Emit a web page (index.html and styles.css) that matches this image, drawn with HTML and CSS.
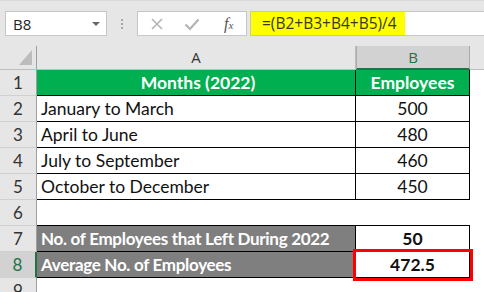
FILE: index.html
```html
<!DOCTYPE html>
<html lang="en">
<head>
    <meta charset="UTF-8">
    <title>Average No. of Employees</title>
    <link rel="stylesheet" href="styles.css">
</head>
<body>

    <!-- Name box and formula bar -->
    <div class="toolbar">
        <div class="namebox">
            <span>B8</span>
            <span class="caret"></span>
        </div>
        <div class="grip"><i></i><i></i><i></i></div>
        <div class="fbuttons">
            <svg width="14" height="14" viewBox="0 0 14 14"><path d="M2 2 L12 12 M12 2 L2 12" stroke="#b4b4b4" stroke-width="1.6" fill="none"/></svg>
            <svg width="16" height="14" viewBox="0 0 16 14"><path d="M1.5 7.5 L6 12 L14.5 2.5" stroke="#b4b4b4" stroke-width="2.2" fill="none"/></svg>
            <span class="fx">f<small>x</small></span>
        </div>
        <div class="formula"><span class="hl">=(B2+B3+B4+B5)/4</span></div>
    </div>

    <!-- Worksheet -->
    <div class="sheet">
        <div class="corner"><span class="tri"></span></div>
        <div class="ch">A</div>
        <div class="ch active">B</div>
        <div class="ch blank"></div>

        <div class="rh">1</div>
        <div class="cell head">Months (2022)</div>
        <div class="cell head num">Employees</div>
        <div class="cell empty"></div>

        <div class="rh">2</div>
        <div class="cell">January to March</div>
        <div class="cell num">500</div>
        <div class="cell empty"></div>

        <div class="rh">3</div>
        <div class="cell">April to June</div>
        <div class="cell num">480</div>
        <div class="cell empty"></div>

        <div class="rh">4</div>
        <div class="cell">July to September</div>
        <div class="cell num">460</div>
        <div class="cell empty"></div>

        <div class="rh">5</div>
        <div class="cell">October to December</div>
        <div class="cell num">450</div>
        <div class="cell empty"></div>

        <div class="rh">6</div>
        <div class="cell gap"></div>
        <div class="cell gap"></div>
        <div class="cell empty"></div>

        <div class="rh">7</div>
        <div class="cell label">No. of Employees that Left During 2022</div>
        <div class="cell num bold">50</div>
        <div class="cell empty"></div>

        <div class="rh active">8</div>
        <div class="cell label">Average No. of Employees</div>
        <div class="cell num bold picked">472.5</div>
        <div class="cell empty"></div>

        <div class="rh">9</div>
        <div class="cell empty"></div>
        <div class="cell empty"></div>
        <div class="cell empty"></div>
    </div>

</body>
</html>
```

FILE: styles.css
```css
* {
    box-sizing: border-box;
}
body {
    margin: 0;
    height: 292px;
    overflow: hidden;
    background: #e6e6e6;
    font-family: 'Open Sans', 'Liberation Sans', sans-serif;
}

/* toolbar */
.toolbar {
    display: flex;
    height: 35px;
    padding: 10px 0 0 5px;
    border-top: 1px solid #dadada;
}
.namebox {
    width: 102px;
    height: 25px;
    background: white;
    border: 1px solid #c6c6c6;
    display: flex;
    align-items: center;
    justify-content: space-between;
    padding: 0 6px 0 7px;
    font-size: 15px;
    color: #222;
}
.caret {
    width: 0;
    height: 0;
    border-left: 4px solid transparent;
    border-right: 4px solid transparent;
    border-top: 4px solid #666;
}
.grip {
    width: 30px;
    display: flex;
    flex-direction: column;
    align-items: center;
    justify-content: center;
    gap: 2px;
    height: 25px;
}
.grip i {
    width: 2px;
    height: 2px;
    background: #a6a6a6;
}
.fbuttons {
    width: 110px;
    height: 25px;
    background: white;
    border: 1px solid #c6c6c6;
    display: flex;
    align-items: center;
    padding-left: 12px;
    gap: 20px;
}
.fx {
    font-family: 'Liberation Serif', serif;
    font-style: italic;
    font-size: 16px;
    color: #555;
    margin-left: 4px;
}
.fx small {
    font-size: 11px;
}
.formula {
    flex: 1;
    height: 25px;
    margin-left: 3px;
    background: white;
    border: 1px solid #c6c6c6;
    border-right: none;
    display: flex;
}
.hl {
    background: #ffff00;
    height: 23px;
    padding: 0 8px 0 11px;
    font-size: 15.5px;
    line-height: 23px;
    color: #3a3a1a;
    white-space: nowrap;
}

/* sheet grid */
.sheet {
    margin-top: 11px;
    display: grid;
    grid-template-columns: 37px 319px 114px 1fr;
    grid-template-rows: 24px repeat(9, 26px);
    font-family: Lato, 'Liberation Sans', sans-serif;
    font-size: 17.5px;
}
.corner {
    position: relative;
    border-right: 1px solid #9f9f9f;
    border-bottom: 1px solid #bdbdbd;
}
.tri {
    position: absolute;
    right: 4px;
    bottom: 4px;
    width: 0;
    height: 0;
    border-left: 13px solid transparent;
    border-bottom: 15px solid #bcbcbc;
}
.ch {
    border-bottom: 1px solid #bdbdbd;
    border-right: 1px solid #bdbdbd;
    text-align: center;
    font-family: 'Open Sans', 'Liberation Sans', sans-serif;
    font-size: 15px;
    line-height: 23px;
    color: #333;
}
.ch.active {
    background: #d2d2d2;
    color: #217346;
    border-right-color: #ababab;
    border-left: 1px solid #ababab;
    border-bottom: 2px solid #217346;
}
.ch.blank {
    border-right: none;
}
.rh {
    text-align: center;
    color: #333;
    font-size: 17px;
    line-height: 25px;
    border-right: 1px solid #9f9f9f;
    border-bottom: 1px solid #d0d0d0;
}
.rh.active {
    background: #d2d2d2;
    color: #217346;
    border-right: 2px solid #217346;
}
.cell {
    background: white;
    border-right: 1px solid #000;
    border-bottom: 1px solid #000;
    padding-left: 4px;
    line-height: 25px;
    color: #111;
    white-space: nowrap;
    overflow: hidden;
}
.cell.num {
    text-align: center;
    padding-left: 0;
}
.cell.head {
    background: #00b050;
    color: white;
    font-weight: bold;
    text-align: center;
}
.cell.label {
    background: #7f7f7f;
    color: white;
    font-weight: bold;
    font-size: 17px;
    letter-spacing: -0.3px;
}
.cell.bold {
    font-weight: bold;
}
.cell.gap {
    border-right: none;
}
.cell.empty {
    border: none;
}
.cell.picked {
    outline: 3px solid #ff0000;
    outline-offset: 0px;
    position: relative;
}
```
